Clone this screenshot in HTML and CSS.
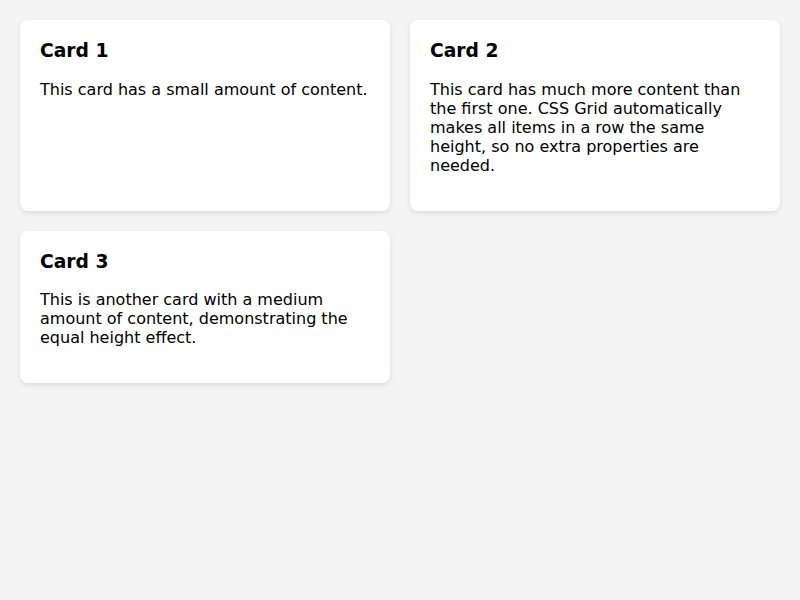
FILE: index.html
```html
<!DOCTYPE html>
<html lang="en">
<head>
<meta charset="utf-8">
<title>Equal height cards</title>
<link rel="stylesheet" href="styles.css">
</head>
<body>
<div class="grid">
  <div class="card">
    <h3 class="card-title">Card 1</h3>
    <p class="card-text">This card has a small amount of content.</p>
  </div>
  <div class="card">
    <h3 class="card-title">Card 2</h3>
    <p class="card-text">This card has much more content than the first one. CSS Grid automatically makes all items in a row the same height, so no extra properties are needed.</p>
  </div>
  <div class="card">
    <h3 class="card-title">Card 3</h3>
    <p class="card-text">This is another card with a medium amount of content, demonstrating the equal height effect.</p>
  </div>
</div>
</body>
</html>
```

FILE: styles.css
```css
html, body {
  margin: 0;
  background: #f4f4f4;
}
body {
  font-family: "DejaVu Sans", sans-serif;
  font-size: 16px;
  color: #000;
  padding: 20px;
}
.grid {
  display: grid;
  grid-template-columns: 1fr 1fr;
  gap: 20px;
}
.card {
  background: #fff;
  border-radius: 8px;
  padding: 20px;
  box-shadow: 0 2px 5px rgba(0, 0, 0, 0.1);
}
.card-title {
  margin: 0 0 18.72px;
  font-size: 18.72px;
  font-weight: bold;
}
.card-text {
  margin: 0 0 16px;
}
```
